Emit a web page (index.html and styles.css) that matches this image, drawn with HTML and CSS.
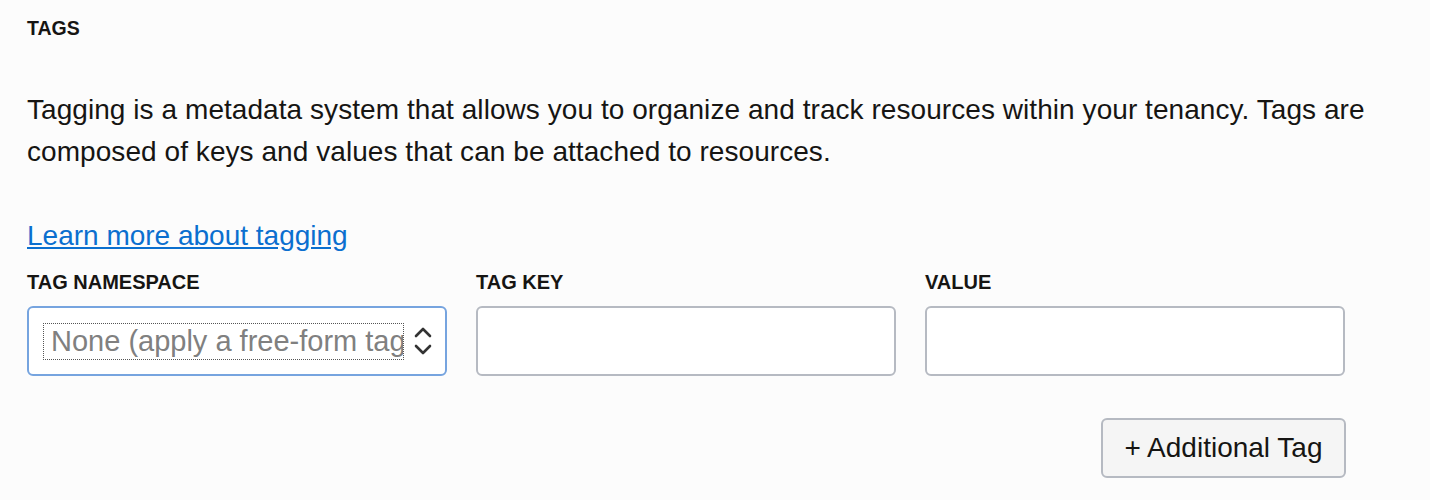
FILE: index.html
```html
<!DOCTYPE html>
<html lang="en">
<head>
<meta charset="utf-8">
<title>Tags</title>
<link rel="stylesheet" href="styles.css">
</head>
<body>
<section class="tags">
  <h2 class="title">TAGS</h2>
  <p class="desc">Tagging is a metadata system that allows you to organize and track resources within your tenancy. Tags are composed of keys and values that can be attached to resources.</p>
  <a class="learn" href="#">Learn more about tagging</a>
  <div class="fields">
    <div class="field">
      <label class="label">TAG NAMESPACE</label>
      <div class="select">
        <span class="select-value">None (apply a free-form tag)</span>
        <svg class="chev" width="20" height="30" viewBox="0 0 20 30" aria-hidden="true">
          <path d="M3 10 L10 3 L17 10" fill="none" stroke="#333" stroke-width="2.6" stroke-linecap="round" stroke-linejoin="round"/>
          <path d="M3 20 L10 27 L17 20" fill="none" stroke="#333" stroke-width="2.6" stroke-linecap="round" stroke-linejoin="round"/>
        </svg>
      </div>
    </div>
    <div class="field">
      <label class="label">TAG KEY</label>
      <input class="input" type="text">
    </div>
    <div class="field">
      <label class="label">VALUE</label>
      <input class="input" type="text">
    </div>
  </div>
  <div class="actions">
    <button class="btn" type="button">+ Additional Tag</button>
  </div>
</section>
</body>
</html>
```
FILE: styles.css
```css
html, body {
  margin: 0;
  padding: 0;
  background: #fcfcfc;
}
body {
  font-family: "Liberation Sans", Arial, Helvetica, sans-serif;
  color: #161513;
}
.tags {
  padding: 17px 27px 0 27px;
}
.title {
  margin: 0;
  font-size: 19.5px;
  line-height: 22px;
  font-weight: bold;
}
.desc {
  margin: 50px 0 0 0;
  font-size: 28px;
  line-height: 42px;
  letter-spacing: 0.06px;
}
.learn {
  display: block;
  margin-top: 42px;
  font-size: 28px;
  line-height: 42px;
  color: #0b6fcf;
  text-decoration: underline;
  width: max-content;
}
.fields {
  display: flex;
  gap: 29px;
  margin-top: 13px;
}
.field {
  display: flex;
  flex-direction: column;
  width: 420px;
}
.label {
  font-size: 20px;
  line-height: 24px;
  font-weight: bold;
  margin-bottom: 12px;
}
.select, .input {
  box-sizing: border-box;
  width: 420px;
  height: 70px;
  border: 2px solid #b6bac2;
  border-radius: 6px;
  background: #fff;
  margin: 0;
  font: inherit;
}
.select {
  border-color: #76a4df;
  display: flex;
  align-items: center;
  padding: 0 12px 0 14px;
  gap: 9px;
  overflow: hidden;
}
.select-value {
  flex: 1;
  min-width: 0;
  white-space: nowrap;
  overflow: hidden;
  border: 1px dotted #555;
  font-size: 29px;
  line-height: 35px;
  color: #808080;
  padding-left: 7px;
}
.chev {
  flex: none;
}
.actions {
  display: flex;
  justify-content: flex-end;
  width: 1319px;
  margin-top: 42px;
}
.btn {
  box-sizing: border-box;
  width: 245px;
  height: 60px;
  border: 2px solid #b6bac2;
  border-radius: 6px;
  background: #f5f5f5;
  font-family: "Liberation Sans", Arial, Helvetica, sans-serif;
  font-size: 28px;
  color: #161513;
  padding: 0;
}
```
